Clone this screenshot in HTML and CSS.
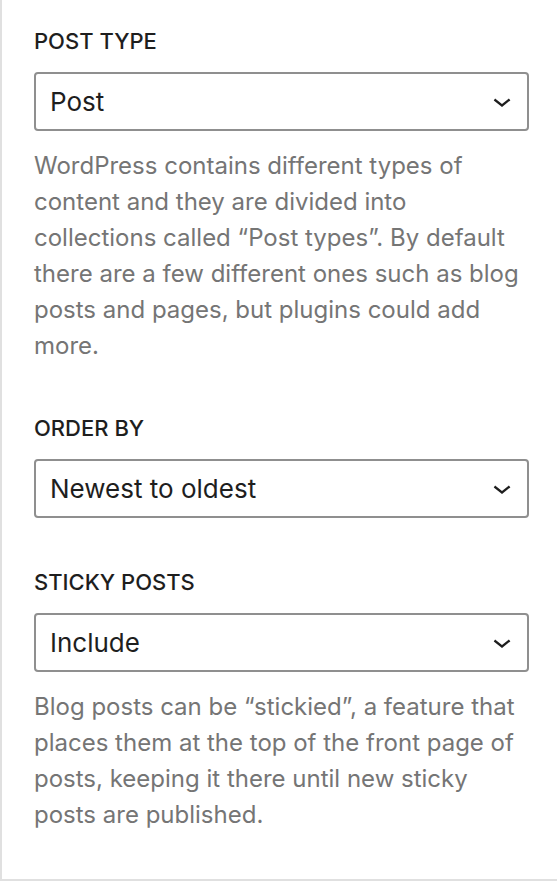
FILE: index.html
```html
<!DOCTYPE html>
<html lang="en">
  <head>
    <meta charset="UTF-8" />
    <meta name="viewport" content="width=device-width, initial-scale=1.0" />
    <title>Query Settings</title>
    <link rel="stylesheet" href="styles.css">
  </head>
  <body>
    <div class="panel">
      <div class="field">
        <label class="field-label">Post type</label>
        <div class="select">
          <span>Post</span>
          <svg class="chevron" viewBox="0 0 24 24" width="36" height="36"><path d="M17.5 11.6L12 16l-5.5-4.4.9-1.2L12 14l4.6-3.6 1 1.2z" /></svg>
        </div>
        <p class="help">
          WordPress contains different types of content and they are divided
          into collections called “Post types”. By default there are a few
          different ones such as blog posts and pages, but plugins could add
          more.
        </p>
      </div>

      <div class="field">
        <label class="field-label">Order by</label>
        <div class="select">
          <span>Newest to oldest</span>
          <svg class="chevron" viewBox="0 0 24 24" width="36" height="36"><path d="M17.5 11.6L12 16l-5.5-4.4.9-1.2L12 14l4.6-3.6 1 1.2z" /></svg>
        </div>
      </div>

      <div class="field">
        <label class="field-label">Sticky posts</label>
        <div class="select">
          <span>Include</span>
          <svg class="chevron" viewBox="0 0 24 24" width="36" height="36"><path d="M17.5 11.6L12 16l-5.5-4.4.9-1.2L12 14l4.6-3.6 1 1.2z" /></svg>
        </div>
        <p class="help">
          Blog posts can be “stickied”, a feature that places them at the top
          of the front page of posts, keeping it there until new sticky posts
          are published.
        </p>
      </div>
    </div>
  </body>
</html>
```

FILE: styles.css
```css
* {
  margin: 0;
  padding: 0;
  box-sizing: border-box;
  font-family: Inter, "Noto Sans", sans-serif;
}
body {
  background: white;
}
.panel {
  width: 557px;
  height: 881px;
  padding: 25px 28px 0 32px;
  border-left: 2px solid #e0e0e0;
  border-bottom: 2px solid #e0e0e0;
}
.field + .field {
  margin-top: 48px;
}
.field-label {
  display: block;
  font-size: 22px;
  line-height: 32px;
  font-weight: 500;
  text-transform: uppercase;
  color: #1e1e1e;
}
.select {
  display: flex;
  justify-content: space-between;
  align-items: center;
  height: 59px;
  margin-top: 15px;
  padding: 0 7px 0 14px;
  border: 2px solid #8f8f8f;
  border-radius: 4px;
  font-size: 26px;
  color: #1e1e1e;
}
.chevron {
  fill: #1e1e1e;
  margin-top: -2px;
}
.help {
  margin-top: 17px;
  font-size: 24px;
  line-height: 36px;
  color: #757575;
}
```
